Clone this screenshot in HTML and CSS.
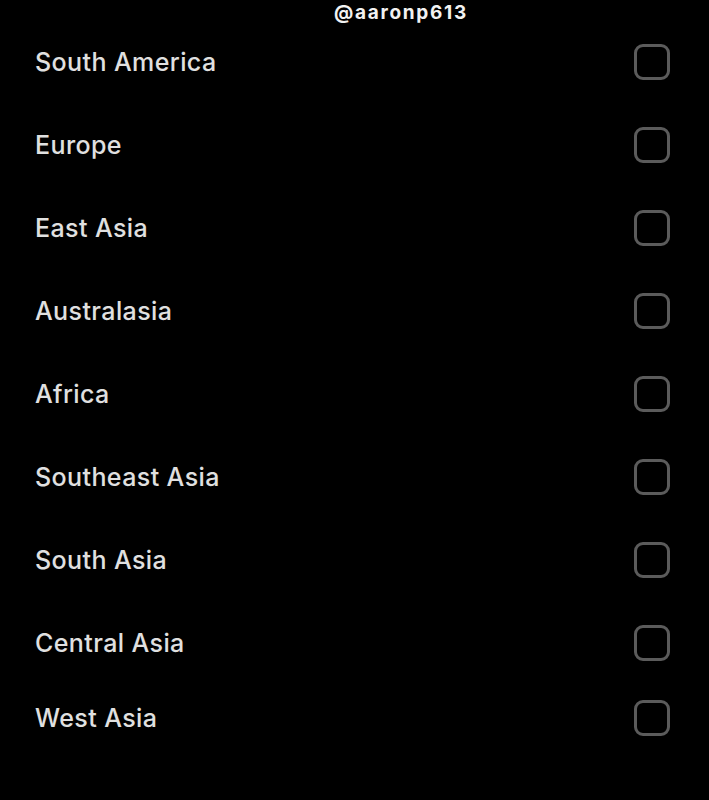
FILE: index.html
```html
<!DOCTYPE html>
<html lang="en">
<head>
<meta charset="utf-8">
<title>Regions</title>
<link rel="stylesheet" href="styles.css">
</head>
<body>
<div class="screen">
  <header class="handle">@aaronp613</header>
  <ul class="regions">
    <li class="region"><span class="label">South America</span><span class="check"></span></li>
    <li class="region"><span class="label">Europe</span><span class="check"></span></li>
    <li class="region"><span class="label">East Asia</span><span class="check"></span></li>
    <li class="region"><span class="label">Australasia</span><span class="check"></span></li>
    <li class="region"><span class="label">Africa</span><span class="check"></span></li>
    <li class="region"><span class="label">Southeast Asia</span><span class="check"></span></li>
    <li class="region"><span class="label">South Asia</span><span class="check"></span></li>
    <li class="region"><span class="label">Central Asia</span><span class="check"></span></li>
    <li class="region region--last"><span class="label">West Asia</span><span class="check"></span></li>
  </ul>
</div>
</body>
</html>
```

FILE: styles.css
```css
html, body {
  margin: 0;
  padding: 0;
  background: #000;
}

.screen {
  width: 709px;
  height: 800px;
  background: #000;
  color: #e0e0e0;
  font-family: Inter, "Noto Sans", "Liberation Sans", sans-serif;
  display: flex;
  flex-direction: column;
}

.handle {
  height: 21px;
  padding-top: 2px;
  display: flex;
  align-items: center;
  justify-content: center;
  padding-left: 93px;
  font-size: 19px;
  font-weight: 700;
  letter-spacing: 1.7px;
  color: #f2f2f2;
  line-height: 1;
}

.regions {
  list-style: none;
  margin: -3px 0 0;
  padding: 0 39px 0 35px;
  display: flex;
  flex-direction: column;
}

.region {
  height: 83px;
  display: flex;
  align-items: center;
  justify-content: space-between;
}

.region--last {
  height: 67px;
}

.label {
  font-size: 25px;
  font-weight: 500;
  letter-spacing: 0.4px;
}

.check {
  width: 30px;
  height: 30px;
  margin-top: 1px;
  border: 3px solid #5b5b5b;
  border-radius: 9px;
}
```
